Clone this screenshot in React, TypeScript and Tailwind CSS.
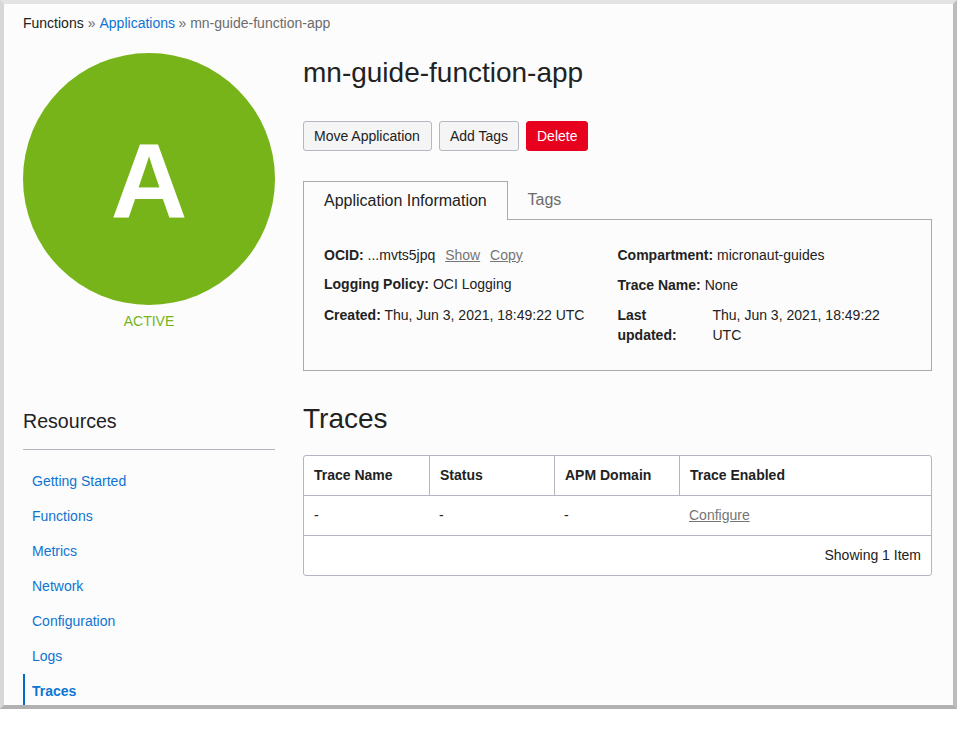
import React from "react";

const navItems = ["Getting Started", "Functions", "Metrics", "Network", "Configuration", "Logs"];

const Button = ({ children, className }: { children: React.ReactNode; className: string }) => (
  <button className={`h-[30px] rounded-[3px] text-left whitespace-nowrap pl-[10px] border ${className}`}>{children}</button>
);

export default function App() {
  return (
    <div className="h-[739px] bg-white font-['Liberation_Sans',Arial,sans-serif] text-[14px] leading-5 text-[#222]">
      <div className="h-[709px] overflow-hidden border-4 border-t-[#e3e3e3] border-r-[#bcbcbc] border-b-[#b1b1b1] border-l-[#d7d7d7] bg-[#fcfcfc] pt-[9px] pl-[19px]">
        <nav className="flex h-10 whitespace-pre">
          <span>Functions</span>
          <span className="ml-1 text-[#6b6b6b]">»</span>
          <a className="ml-1 text-[#0e74d3]">Applications</a>
          <span className="ml-[3.5px] text-[#6b6b6b]">» mn-guide-function-app</span>
        </nav>
        <div className="flex gap-7">
          <aside className="w-[252px] shrink-0">
            <div className="flex h-[252px] items-center justify-center rounded-full bg-[#77b41a] text-[106px] font-bold text-white">
              <span className="mt-[3px]">A</span>
            </div>
            <div className="mt-[6px] text-center text-[#77b41a]">ACTIVE</div>
            <h2 className="mt-[76px] h-[43px] border-b border-[#b3b5c0] text-[19.6px] leading-7">Resources</h2>
            <ul className="mt-[14px]">
              {navItems.map((t) => (
                <li key={t} className="h-[35px] pl-[9px] leading-[35px] text-[#0e74d3]">{t}</li>
              ))}
              <li className="h-[35px] border-l-2 border-[#006bc8] pl-[7px] font-bold leading-[35px] text-[#0e74d3]">Traces</li>
            </ul>
          </aside>
          <main className="w-[629px]">
            <h1 className="h-[68px] text-[28px] leading-10">mn-guide-function-app</h1>
            <div className="flex gap-[7px]">
              <Button className="w-[129px] border-[#b3b8c2] bg-[#f5f5f5]">Move Application</Button>
              <Button className="w-[80px] border-[#b3b8c2] bg-[#f5f5f5]">Add Tags</Button>
              <Button className="w-[62px] border-[#e8001f] bg-[#e8001f] text-white">Delete</Button>
            </div>
            <div className="mt-[30px] flex h-[39px] text-[16px]">
              <div className="relative z-10 h-[39px] w-[205px] border border-b-0 border-[#aaa] bg-[#fcfcfc] pl-5 leading-[37px]">Application Information</div>
              <div className="pl-[19.5px] leading-[37px] text-[#6b6b6b]">Tags</div>
            </div>
            <section className="-mt-px flex h-[152px] border border-[#aaa] pt-[25px] pl-5">
              <div className="w-[293.5px]">
                <p><b>OCID:</b> ...mvts5jpq <u className="ml-[6px] text-[#757575]">Show</u> <u className="ml-[6px] text-[#757575]">Copy</u></p>
                <p className="mt-[9px]"><b>Logging Policy:</b> OCI Logging</p>
                <p className="mt-[11px]"><b>Created:</b> Thu, Jun 3, 2021, 18:49:22 UTC</p>
              </div>
              <div>
                <p><b>Compartment:</b> micronaut-guides</p>
                <p className="mt-[10px]"><b>Trace Name:</b> None</p>
                <div className="mt-[10px] flex">
                  <b className="w-[95px] pr-6">Last updated:</b>
                  <span className="w-[180px]">Thu, Jun 3, 2021, 18:49:22 UTC</span>
                </div>
              </div>
            </section>
            <h2 className="mt-[28px] h-14 text-[28px] leading-10">Traces</h2>
            <div className="rounded-[3px] border border-[#b3b5c0] bg-white">
              <div className="grid h-10 grid-cols-[125px_125px_125px_1fr] border-b border-[#b3b5c0] font-bold leading-[39px]">
                <div className="pl-[10px]">Trace Name</div>
                <div className="border-l border-[#b3b5c0] pl-[10px]">Status</div>
                <div className="border-l border-[#b3b5c0] pl-[10px]">APM Domain</div>
                <div className="border-l border-[#b3b5c0] pl-[10px]">Trace Enabled</div>
              </div>
              <div className="grid h-10 grid-cols-[125px_125px_125px_1fr] border-b border-[#b3b5c0] pl-[10px] leading-[39px]">
                <span>-</span><span>-</span><span>-</span><u className="text-[#757575]">Configure</u>
              </div>
              <div className="h-[39px] pr-[10px] text-right leading-[39px]">Showing 1 Item</div>
            </div>
          </main>
        </div>
      </div>
    </div>
  );
}
